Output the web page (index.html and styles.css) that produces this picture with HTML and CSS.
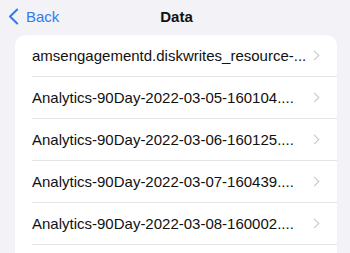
FILE: index.html
```html
<!DOCTYPE html>
<html>
<head>
<meta charset="utf-8">
<link rel="stylesheet" href="styles.css">
</head>
<body>
<div class="nav">
  <div class="back">
    <svg class="back-icon" width="11" height="17" viewBox="0 0 11 17"><path d="M9.2 1.5 L2 8.5 L9.2 15.5" fill="none" stroke="#2f7bf5" stroke-width="2" stroke-linecap="round" stroke-linejoin="round"/></svg>
    <span>Back</span>
  </div>
  <div class="title">Data</div>
</div>
<div class="card">
  <div class="row"><span class="label">amsengagementd.diskwrites_resource-...</span><span class="chev"></span></div>
  <div class="row"><span class="label">Analytics-90Day-2022-03-05-160104....</span><span class="chev"></span></div>
  <div class="row"><span class="label">Analytics-90Day-2022-03-06-160125....</span><span class="chev"></span></div>
  <div class="row"><span class="label">Analytics-90Day-2022-03-07-160439....</span><span class="chev"></span></div>
  <div class="row"><span class="label">Analytics-90Day-2022-03-08-160002....</span><span class="chev"></span></div>
  <div class="filler"></div>
</div>
</body>
</html>
```
FILE: styles.css
```css
html, body {
  margin: 0;
  padding: 0;
  background: #f2f2f7;
  font-family: "Liberation Sans", Arial, sans-serif;
  overflow: hidden;
  height: 253px;
}
.nav {
  position: relative;
  height: 35px;
  display: flex;
  align-items: center;
}
.back {
  display: flex;
  align-items: center;
  gap: 7px;
  padding-left: 8px;
  color: #2f7bf5;
  font-size: 15px;
  margin-top: -3px;
}
.back-icon {
  display: block;
}
.title {
  position: absolute;
  left: 0;
  right: 0;
  top: 8px;
  text-align: center;
  font-size: 15px;
  font-weight: bold;
  color: #111;
  padding-left: 3px;
}
.card {
  margin: 0 13px 0 15px;
  background: #fff;
  border-radius: 10px;
  overflow: hidden;
}
.row {
  height: 42px;
  display: flex;
  align-items: center;
  margin-left: 17px;
  padding-right: 17px;
  border-bottom: 1px solid #e3e3e8;
  box-sizing: border-box;
  justify-content: space-between;
}
.filler {
  height: 20px;
}
.label {
  font-size: 15px;
  color: #111;
  white-space: nowrap;
}
.chev {
  width: 6px;
  height: 6px;
  border-top: 1.5px solid #c4c4c8;
  border-right: 1.5px solid #c4c4c8;
  transform: rotate(45deg);
  margin-right: 2px;
}
```
